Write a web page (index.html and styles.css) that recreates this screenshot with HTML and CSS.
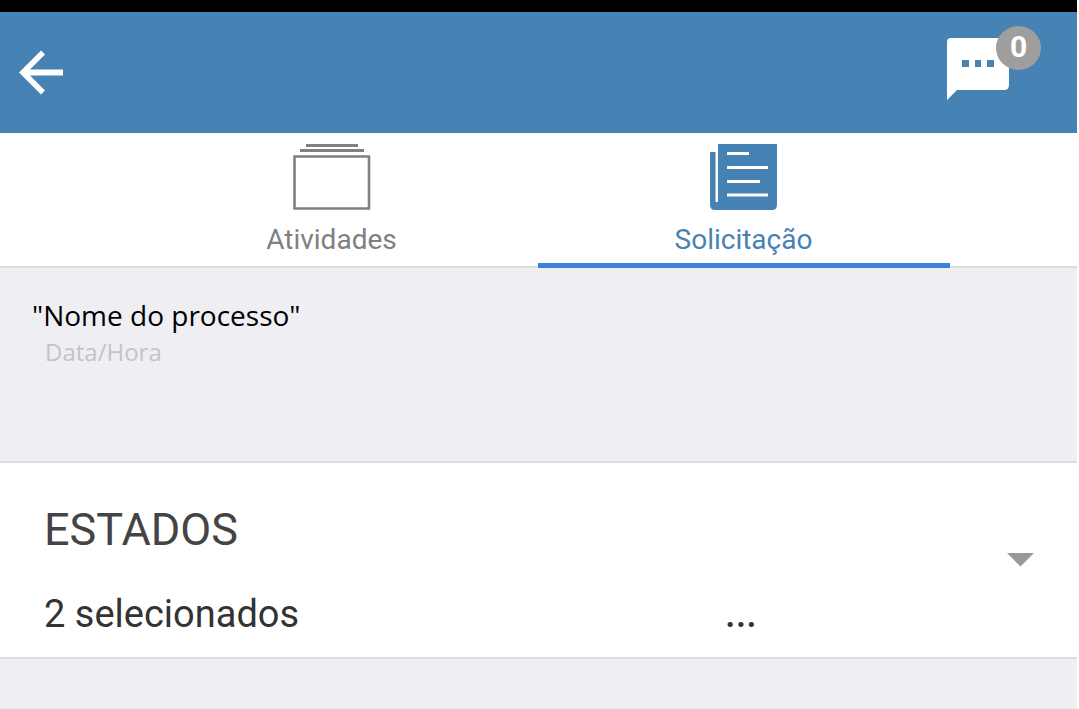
FILE: index.html
```html
<!DOCTYPE html>
<html lang="pt-BR">
<head>
    <meta charset="UTF-8">
    <meta name="viewport" content="width=device-width, initial-scale=1.0">
    <title>Solicitação</title>
    <link rel="stylesheet" href="styles.css">
</head>
<body>
    <div class="status-bar"></div>
    <header class="toolbar">
        <button class="icon-button" type="button" aria-label="Voltar">
            <svg width="45" height="45" viewBox="0 0 45 45">
                <path d="M44 19.500V25.500H11L26 40.500L22 44.500L0 22.500L22 0.500L26 4.500L11 19.500Z" fill="#fff"/>
            </svg>
        </button>
        <button class="icon-button chat" type="button" aria-label="Mensagens">
            <svg width="62" height="62" viewBox="0 0 62 62">
                <path d="M4 0H57Q62 0 62 5V47Q62 52 57 52H10L0 62V4Q0 0 4 0Z" fill="#fff"/>
                <path d="M15 22h7v7h-7zM28 22h6v7h-6zM40 22h7v7h-7z" fill="#4682b4"/>
            </svg>
            <span class="badge">0</span>
        </button>
    </header>

    <nav class="tabs">
        <a class="tab" href="#atividades">
            <svg width="78" height="66" viewBox="0 0 78 66">
                <path d="M13 0h52v3H13zM7 5h64v3H7z" fill="#808080"/>
                <path d="M1.500 12.500h74.500v52H1.500z" fill="none" stroke="#808080" stroke-width="2.600"/>
            </svg>
            <span>Atividades</span>
        </a>
        <a class="tab active" href="#solicitacao">
            <svg width="67" height="66" viewBox="0 0 67 66">
                <path d="M8 0H67V61Q67 66 62 66H5Q0 66 0 61V8H5.500V58H8Z" fill="#4682b4"/>
                <path d="M17 8h22v3H17zM17 22h41v3H17zM17 36h33v3H17zM17 49.500h41v3H17z" fill="#fff"/>
            </svg>
            <span>Solicitação</span>
        </a>
    </nav>

    <main>
        <section class="process">
            <h1>"Nome do processo"</h1>
            <p>Data/Hora</p>
        </section>

        <button class="field" type="button">
            <span class="field-text">
                <span class="field-label">ESTADOS</span>
                <span class="field-value">
                    <span>2 selecionados</span>
                    <span class="more">...</span>
                </span>
            </span>
            <svg width="27" height="14" viewBox="0 0 27 14">
                <path d="M0 0H27L13.500 13.500Z" fill="#999"/>
            </svg>
        </button>
    </main>
</body>
</html>
```

FILE: styles.css
```css
* {
    box-sizing: border-box;
}
html {
    background-color: #fff;
}
body {
    margin: 0;
    min-height: 100vh;
    border-right: 2px solid #fff;
    background-color: #efeef3;
    font-family: Roboto, sans-serif;
}
svg {
    display: block;
}
button {
    margin: 0;
    padding: 0;
    border: 0;
    background: none;
    font: inherit;
    cursor: pointer;
}
.status-bar {
    height: 12px;
    background-color: #000;
}
.toolbar {
    display: flex;
    align-items: center;
    justify-content: space-between;
    padding: 26px 68px 26px 19px;
    background-color: #4682b4;
}
.chat {
    position: relative;
    padding-bottom: 7px;
}
.badge {
    position: absolute;
    top: -12px;
    right: -32px;
    width: 45px;
    height: 44px;
    border-radius: 50%;
    background-color: #9e9e9e;
    color: #fff;
    font-size: 30px;
    font-weight: bold;
    line-height: 42px;
    text-align: center;
}
.tabs {
    display: flex;
    justify-content: center;
    padding-right: 2px;
    border-bottom: 2px solid #dcdcdc;
    background-color: #fff;
}
.tab {
    display: flex;
    flex-direction: column;
    align-items: center;
    gap: 14px;
    width: 412px;
    margin-bottom: -2px;
    padding-top: 11px;
    border-bottom: 5px solid transparent;
    color: #808080;
    font-size: 28px;
    line-height: 32px;
    text-decoration: none;
}
.tab span {
    padding-bottom: 7px;
}
.tab.active {
    border-color: #4080e0;
    color: #4682b4;
}
.process {
    min-height: 193px;
    padding: 28px 32px;
    font-family: "Open Sans", sans-serif;
}
.process h1 {
    margin: 0;
    color: #000;
    font-size: 28px;
    font-weight: normal;
    line-height: 38px;
}
.process p {
    margin: 0;
    padding-left: 13px;
    color: #c4c4c6;
    font-size: 24px;
    line-height: 36px;
}
.field {
    display: flex;
    align-items: center;
    justify-content: space-between;
    width: 100%;
    padding: 0 43px 0 44px;
    border-top: 2px solid #dcdcdc;
    border-bottom: 2px solid #dcdcdc;
    background-color: #fff;
    text-align: left;
}
.field-text {
    display: flex;
    flex-direction: column;
    gap: 30px;
    width: 72%;
    padding: 40px 0 16px;
}
.field-label {
    color: #444;
    font-size: 45px;
    line-height: 54px;
}
.field-value {
    display: flex;
    justify-content: space-between;
    color: #333;
    font-size: 38px;
    line-height: 54px;
}
.more {
    font-weight: 500;
}
```
